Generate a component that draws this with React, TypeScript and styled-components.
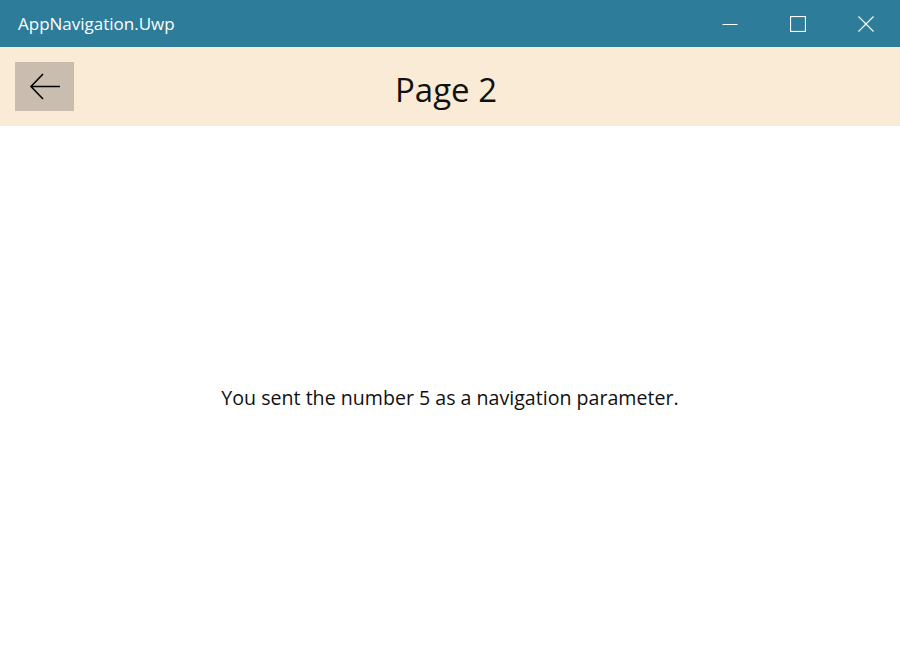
import React from "react";
import styled, { createGlobalStyle } from "styled-components";

const Global = createGlobalStyle`
  html, body { margin: 0; padding: 0; background: #ffffff; }
  body { font-family: "Open Sans", "Noto Sans", sans-serif; }
`;

const Window = styled.div`
  width: 900px;
  height: 664px;
  display: flex;
  flex-direction: column;
  background: #ffffff;
`;

const TitleBar = styled.div`
  height: 47px;
  background: #2d7c9a;
  display: flex;
  align-items: center;
  color: #ffffff;
`;

const AppTitle = styled.div`
  flex: 1;
  padding-left: 18px;
  font-size: 17px;
  font-family: "Open Sans", sans-serif;
  padding-bottom: 1px;
`;

const CaptionButton = styled.div`
  width: 68px;
  height: 47px;
  display: flex;
  align-items: center;
  justify-content: center;
`;

const Header = styled.div`
  height: 79px;
  background: #faebd7;
  display: grid;
  grid-template-columns: 1fr;
  align-items: center;
  position: relative;
`;

const BackButton = styled.div`
  position: absolute;
  left: 15px;
  top: 15px;
  width: 59px;
  height: 49px;
  background: #c9bdb0;
  display: flex;
  align-items: center;
  justify-content: center;
`;

const PageTitle = styled.h1`
  margin: 0;
  text-align: center;
  font-weight: 400;
  font-size: 33px;
  color: #111111;
  padding-right: 8px;
  padding-top: 6px;
`;

const Content = styled.div`
  flex: 1;
  display: flex;
  align-items: center;
  justify-content: center;
`;

const Message = styled.p`
  margin: 4px 0 0 0;
  font-size: 19.6px;
  color: #111111;
`;

export default function App() {
  return (
    <>
      <Global />
      <Window>
        <TitleBar>
          <AppTitle>AppNavigation.Uwp</AppTitle>
          <CaptionButton>
            <svg width="16" height="16" viewBox="0 0 16 16">
              <line x1="0.5" y1="8.5" x2="15.5" y2="8.5" stroke="#fff" strokeWidth="1" />
            </svg>
          </CaptionButton>
          <CaptionButton>
            <svg width="16" height="16" viewBox="0 0 16 16">
              <rect x="0.5" y="0.5" width="15" height="15" fill="none" stroke="#fff" strokeWidth="1.2" />
            </svg>
          </CaptionButton>
          <CaptionButton>
            <svg width="16" height="16" viewBox="0 0 16 16">
              <path d="M0.5 0.5 L15.5 15.5 M15.5 0.5 L0.5 15.5" stroke="#fff" strokeWidth="1.1" />
            </svg>
          </CaptionButton>
        </TitleBar>
        <Header>
          <BackButton>
            <svg width="32" height="32" viewBox="0 0 32 32">
              <path d="M2 15.5 H31 M14 3 L2 15.5 L14 28" fill="none" stroke="#000" strokeWidth="1.6" />
            </svg>
          </BackButton>
          <PageTitle>Page 2</PageTitle>
        </Header>
        <Content>
          <Message>You sent the number 5 as a navigation parameter.</Message>
        </Content>
      </Window>
    </>
  );
}
